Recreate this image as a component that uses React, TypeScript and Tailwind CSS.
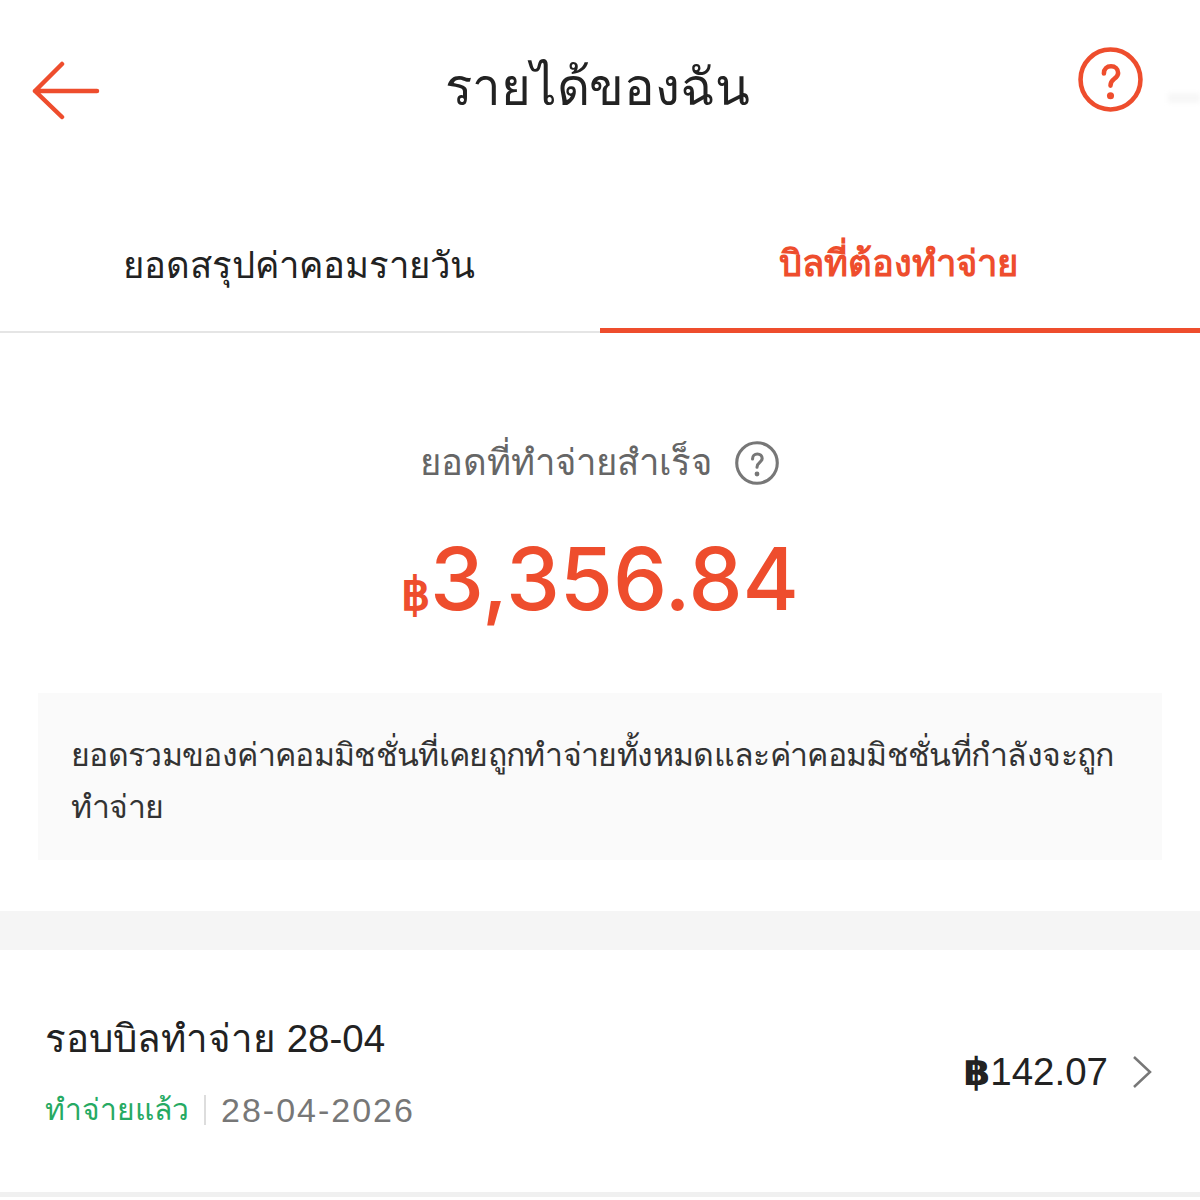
const THAI = "font-['Liberation_Sans','Noto_Sans','DejaVu_Sans',sans-serif]";

const HelpIcon = ({ className }: { className: string }) => (
  <svg viewBox="0 0 64 64" fill="none" className={className}>
    <circle cx="32" cy="32" r="29.5" stroke="currentColor" strokeWidth="4.500" />
    <path d="M25.500 26c0-4.500 3-7 7-7s7 2.500 7 6.500c0 3-2 4.500-4 6-2 1.500-3.500 3-3.500 6.500" stroke="currentColor" strokeWidth="4.500" strokeLinecap="round" />
    <circle cx="32" cy="48" r="3.500" fill="currentColor" />
  </svg>
);

export default function App() {
  return (
    <div className={`relative w-[1200px] h-[1200px] overflow-hidden bg-white ${THAI}`}>
      {/* Top bar */}
      <div className="h-[180px] flex items-start justify-between pl-[32px] pr-[57px]">
        <svg viewBox="0 0 68 60" fill="none" className="w-[68px] h-[60px] mt-[61px] text-[#ee4d2d]">
          <path d="M65 30H3M30 3L3 30l27 26" stroke="currentColor" strokeWidth="4.500" strokeLinecap="round" strokeLinejoin="round" />
        </svg>
        <h1 className="ml-[17px] mt-[58px] text-[51px] leading-[60px] tracking-[-0.2px] text-[#222222]">รายได้ของฉัน</h1>
        <HelpIcon className="w-[65px] h-[65px] mt-[47px] text-[#ee4d2d]" />
      </div>
      <div className="absolute right-0 top-[93px] w-[32px] h-[10px] bg-[#f7f7f7] blur-[2px]" />

      {/* Tabs */}
      <div className="h-[153px] flex border-b-2 border-[#e5e5e5]">
        <div className="w-[600px] flex justify-center pt-[61px]">
          <span className="text-[36.500px] leading-[50px] text-[#222222] -ml-[2px]">ยอดสรุปค่าคอมรายวัน</span>
        </div>
        <div className="w-[600px] flex justify-center pt-[59px] border-b-[5px] border-[#ee4d2d] -mb-[2px]">
          <span className="text-[36.500px] leading-[50px] font-bold text-[#ee4d2d] -ml-[3px]">บิลที่ต้องทำจ่าย</span>
        </div>
      </div>

      {/* Total */}
      <div className="h-[360px] flex flex-col items-center">
        <div className="mt-[105px] flex items-center gap-[23px] -ml-[2px]">
          <span className="text-[36.500px] leading-[50px] text-[#666666]">ยอดที่ทำจ่ายสำเร็จ</span>
          <HelpIcon className="w-[44px] h-[44px] text-[#777777]" />
        </div>
        <div className="mt-[46px] flex items-baseline text-[#ee4d2d] font-['Inter',sans-serif] font-medium">
          <span className="text-[46px] leading-[90px] font-bold font-['Liberation_Sans',sans-serif]">฿</span>
          <span className="text-[86px] leading-[90px]">3,356.84</span>
        </div>
      </div>

      {/* Note */}
      <div className="mx-[38px] h-[167px] bg-[#fafafa] pl-[33px] pr-[40px] pt-[36px] text-[32px] leading-[52px] tracking-[-0.650px] text-[#333333]">
        ยอดรวมของค่าคอมมิชชั่นที่เคยถูกทำจ่ายทั้งหมดและค่าคอมมิชชั่นที่กำลังจะถูกทำจ่าย
      </div>

      <div className="mt-[51px] h-[39px] bg-[#f5f5f5]" />

      {/* Bill row */}
      <div className="h-[247px] flex items-start justify-between pl-[45px] pr-[48px] border-b-[5px] border-[#f0f0f0]">
        <div>
          <div className="mt-[65px] text-[38.500px] leading-[48px] text-[#222222]">รอบบิลทำจ่าย 28-04</div>
          <div className="mt-[27px] flex items-center text-[30px] leading-[40px]">
            <span className="text-[#26aa63]">ทำจ่ายแล้ว</span>
            <span className="w-[2px] h-[30px] bg-[#dddddd] ml-[15px] mr-[15px]" />
            <span className="text-[34px] tracking-[2px] text-[#777777]">28-04-2026</span>
          </div>
        </div>
        <div className="mt-[100px] flex items-center gap-[24px]">
          <span className="text-[38.500px] leading-[44px] text-[#222222]"><span className="font-bold">฿</span>142.07</span>
          <svg viewBox="0 0 20 34" fill="none" className="w-[20px] h-[34px] text-[#777777]">
            <path d="M2 2l16 15L2 32" stroke="currentColor" strokeWidth="2.500" />
          </svg>
        </div>
      </div>
    </div>
  );
}
